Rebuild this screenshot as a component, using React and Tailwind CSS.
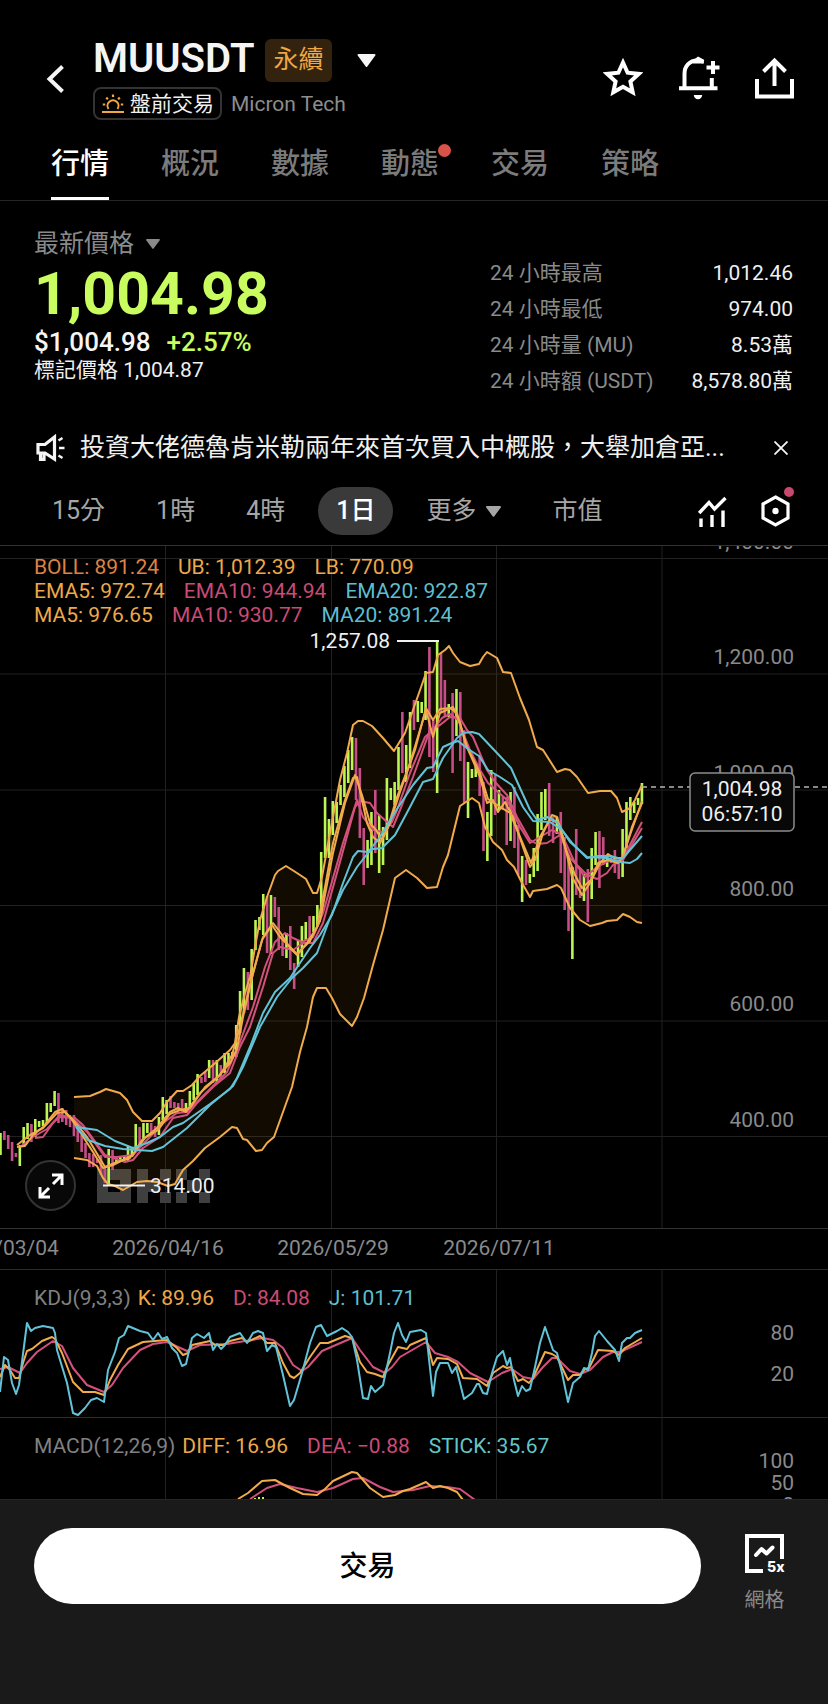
const UP = "#bdf553";
const DOWN = "#c74d88";
const ORANGE = "#f2ab4c";
const PINK = "#d4517d";
const BLUE = "#62c3d8";

const STEP = 3.864;

// [top, bottom, rising] per day
const candles = [
  [588, 610, 1], [586, 595, 0], [590, 604, 0], [597, 616, 0], [608, 612, 0], [600, 621, 1], [582, 602, 1], [578, 594, 1],
  [579, 597, 0], [574, 592, 1], [576, 582, 1], [575, 581, 1], [558, 578, 1], [558, 567, 1], [546, 561, 1], [548, 578, 0],
  [563, 577, 0], [565, 580, 0], [570, 582, 0], [570, 591, 0], [582, 597, 0], [590, 607, 0], [598, 613, 0], [608, 622, 0],
  [609, 622, 0], [614, 618, 0], [610, 630, 0], [622, 638, 0], [604, 639, 1], [605, 625, 0], [613, 618, 1], [612, 617, 1],
  [611, 617, 1], [601, 616, 1], [603, 612, 1], [579, 605, 1], [582, 603, 0], [578, 595, 1], [578, 588, 1], [578, 588, 0],
  [581, 592, 0], [572, 590, 1], [552, 575, 1], [555, 569, 1], [551, 563, 0], [557, 563, 0], [558, 565, 0], [554, 567, 0],
  [558, 568, 1], [546, 563, 1], [538, 555, 1], [529, 550, 1], [532, 538, 0], [527, 537, 0], [515, 533, 1], [515, 538, 0],
  [515, 538, 1], [520, 534, 0], [508, 528, 1], [508, 520, 1], [507, 514, 1], [480, 512, 1], [446, 488, 1], [423, 468, 1],
  [427, 465, 0], [404, 455, 1], [375, 405, 1], [372, 385, 1], [349, 390, 1], [351, 408, 0], [350, 409, 1], [352, 372, 0],
  [362, 405, 0], [392, 411, 0], [388, 413, 1], [381, 425, 0], [418, 444, 0], [395, 422, 1], [381, 412, 1], [377, 395, 1],
  [371, 398, 0], [371, 387, 1], [360, 382, 1], [307, 368, 1], [252, 313, 1], [274, 313, 1], [256, 290, 1], [257, 278, 1],
  [240, 260, 1], [221, 252, 1], [205, 238, 1], [192, 225, 1], [193, 255, 0], [223, 293, 0], [283, 340, 0], [295, 323, 1],
  [267, 320, 1], [245, 308, 0], [270, 328, 1], [282, 320, 1], [233, 295, 1], [243, 255, 1], [237, 260, 1], [202, 245, 1],
  [167, 228, 0], [200, 237, 1], [167, 223, 1], [155, 185, 0], [156, 177, 1], [157, 168, 1], [126, 175, 1], [102, 212, 0],
  [175, 227, 0], [96, 248, 1], [108, 168, 0], [135, 172, 0], [159, 172, 1], [148, 228, 0], [144, 191, 1], [147, 216, 0],
  [185, 258, 0], [217, 273, 1], [224, 233, 1], [218, 232, 1], [210, 251, 0], [237, 306, 0], [267, 316, 1], [225, 291, 1],
  [230, 270, 0], [245, 265, 1], [252, 265, 0], [252, 300, 0], [247, 296, 1], [242, 303, 0], [280, 330, 0], [311, 357, 1],
  [315, 340, 0], [329, 338, 1], [303, 332, 1], [269, 326, 1], [247, 285, 1], [244, 275, 1], [238, 291, 0], [272, 298, 0],
  [272, 289, 1], [267, 328, 0], [292, 365, 0], [315, 386, 0], [322, 414, 1], [284, 350, 0], [323, 353, 0], [329, 356, 1],
  [324, 377, 0], [303, 354, 1], [287, 320, 1], [286, 343, 0], [292, 320, 0], [310, 322, 1], [310, 318, 0], [305, 328, 0],
  [312, 334, 0], [284, 332, 1], [257, 303, 1], [252, 275, 1], [257, 268, 1], [253, 260, 1], [238, 259, 1],
];

const upper =
  "74,552 90,551 100,547 106,544 120,548 127,555 133,567 142,576 152,576 160,568 167,557 177,546 183,546 192,540 200,531 213,520 230,505 235,498 239,472 245,448 250,432 255,402 260,375 267,352 275,330 278,326 286,321 297,328 306,334 313,348 317,348 322,332 330,288 340,235 347,208 353,180 358,176 363,176 372,181 383,193 394,206 405,188 413,165 426,128 433,127 438,110 445,105 449,101 453,108 460,117 470,121 479,119 483,112 487,107 497,113 503,127 511,128 520,153 529,175 537,202 543,205 557,227 565,224 570,225 577,232 588,248 600,246 611,246 617,253 622,267 630,263 635,255 642,240";
const lower =
  "74,613 87,615 97,621 103,633 108,639 115,641 123,645 137,637 147,636 157,637 168,641 175,639 183,625 193,616 205,603 220,592 232,582 237,583 243,594 247,595 256,606 262,605 267,598 274,592 283,567 292,542 300,507 307,482 313,452 317,443 326,443 332,453 340,469 352,481 357,472 364,453 373,420 383,385 395,333 406,325 417,333 427,343 437,342 443,322 448,310 460,261 466,257 472,253 479,258 485,282 493,297 502,305 507,315 514,322 522,338 530,352 533,346 547,344 557,340 561,343 570,363 580,375 590,381 602,378 607,376 617,375 623,369 630,372 637,377 642,378";
const ma5 =
  "17,602 25,601 33,590 43,582 55,567 62,564 70,572 80,587 93,607 103,623 113,620 133,610 142,595 157,583 170,567 178,563 186,567 200,548 217,533 230,518 237,504 243,472 253,428 263,392 273,378 280,387 290,403 297,410 307,398 317,382 325,342 333,298 345,255 353,233 357,232 362,255 367,278 373,292 380,298 388,282 397,252 410,218 426,165 433,192 440,168 453,162 460,178 467,202 480,232 487,258 493,255 498,267 505,257 513,272 523,302 530,322 535,315 543,288 552,270 557,272 563,292 572,332 582,350 590,338 598,318 608,315 618,318 623,312 632,282 642,258";
const ema5 =
  "17,600 30,590 43,583 57,568 65,567 75,577 87,592 105,622 117,617 130,613 145,593 158,585 170,569 180,565 190,563 205,542 220,530 232,510 240,482 250,440 262,395 272,380 280,392 290,402 297,409 310,396 320,376 333,308 345,258 355,230 362,250 370,278 376,285 382,295 390,278 400,247 415,205 426,163 433,175 440,164 450,163 457,168 466,200 480,228 488,254 500,262 510,268 520,292 531,318 540,292 550,274 558,278 566,305 575,330 582,343 592,334 600,318 608,309 614,313 622,313 630,290 642,256";
const ma10 =
  "35,593 43,592 53,578 59,572 75,573 83,580 105,610 125,617 133,615 143,603 160,592 173,573 187,570 197,558 213,542 230,528 240,502 250,482 263,442 273,408 280,402 293,405 303,398 313,398 323,378 337,328 355,262 360,256 370,258 377,268 387,277 393,282 400,265 413,232 430,185 440,180 450,172 460,173 467,185 473,192 487,225 495,237 507,250 517,272 530,295 537,299 547,298 560,290 570,313 587,330 597,334 607,328 613,320 623,315 642,283";
const ema10 =
  "20,602 33,592 47,584 60,570 72,573 87,587 105,612 117,612 133,610 147,595 163,578 177,568 187,567 207,547 227,527 240,497 253,462 265,422 275,397 285,388 293,393 302,397 313,392 323,368 343,298 357,255 363,272 373,285 383,287 392,277 397,265 410,228 425,192 433,185 442,173 450,169 458,175 470,205 480,225 488,238 507,255 520,282 530,298 540,292 552,285 562,290 575,318 585,332 597,322 610,315 622,315 642,277";
const ma20 =
  "76,582 88,595 105,601 123,604 152,606 163,602 187,583 210,560 233,541 243,522 260,482 277,452 292,433 303,423 317,408 330,373 343,345 357,322 368,308 373,304 382,303 395,290 410,262 423,237 433,234 443,213 457,193 463,188 472,187 479,189 497,208 511,223 520,243 530,265 537,275 547,272 557,277 570,297 587,312 607,313 620,317 630,318 637,314 642,308";
const ema20 =
  "76,582 97,585 115,596 133,603 147,598 160,592 173,582 183,578 210,559 230,544 237,533 250,502 263,468 275,447 290,433 310,403 320,390 332,370 343,338 353,312 358,306 368,307 380,292 397,264 413,240 427,223 433,222 443,202 452,198 458,196 468,204 479,211 488,225 500,232 512,240 523,262 533,276 550,277 562,285 573,299 587,313 598,311 610,311 622,314 630,305 642,291";

const kdjJ =
  "0,123 4,88 8,91 12,114 16,125 19,116 27,54 31,62 35,59 43,57 53,59 55,64 57,81 67,114 73,144 78,146 85,139 91,131 97,129 104,133 108,101 115,83 119,69 124,66 128,57 140,62 148,64 153,71 158,64 162,70 167,68 172,79 177,84 182,97 186,95 192,69 197,65 204,69 209,64 213,81 217,75 221,80 225,76 230,68 235,66 240,64 247,74 253,64 258,62 263,64 267,82 272,76 276,78 283,106 290,137 294,131 302,104 310,74 316,58 321,56 327,67 337,62 342,59 348,63 352,68 357,91 363,129 368,130 371,117 375,123 383,116 390,84 394,64 398,54 402,66 406,73 410,63 421,61 426,64 428,81 433,127 436,103 440,94 448,94 452,104 456,98 464,130 472,124 477,115 479,115 483,124 487,125 492,104 497,88 503,82 507,96 510,89 514,111 518,127 522,117 526,122 530,120 535,98 540,74 545,58 553,81 557,84 562,104 568,133 573,114 580,108 584,99 588,101 592,84 595,67 599,62 607,72 615,81 619,92 622,74 627,69 630,69 635,64 642,61";
const kdjK =
  "0,108 5,96 10,101 15,109 19,109 23,94 27,82 32,80 42,72 52,68 55,70 62,84 73,113 83,123 95,123 104,126 110,111 118,96 128,80 143,73 167,71 177,79 183,86 188,84 192,76 210,72 215,76 223,76 230,72 242,69 247,73 260,67 267,74 275,74 283,94 290,107 294,109 300,104 310,88 320,74 328,74 345,67 352,69 360,93 367,103 375,105 383,108 388,96 398,78 407,80 410,76 426,69 433,96 437,89 448,90 457,95 463,109 477,110 487,117 493,104 503,97 507,99 511,98 518,112 523,110 529,114 533,109 545,83 552,85 557,88 568,111 573,106 580,106 585,100 589,99 598,81 613,82 619,86 625,79 642,69";
const kdjD =
  "0,100 8,98 20,104 27,94 37,83 53,72 62,77 73,99 87,116 104,123 112,116 123,99 140,81 153,75 167,73 187,82 200,76 227,75 263,69 273,71 283,79 293,96 302,102 308,98 322,82 352,69 360,81 373,98 385,104 392,98 400,88 426,73 435,84 448,88 458,93 470,104 488,113 502,104 512,100 523,108 533,110 543,98 552,89 557,89 570,102 580,105 590,101 603,88 613,83 620,83 642,73";
const diff =
  "238,82 248,76 262,64 275,63 290,71 303,77 317,78 325,72 333,64 352,55 357,56 370,71 383,80 395,78 403,74 410,72 426,65 433,71 440,69 448,71 457,75 463,83";
const dea =
  "250,82 267,71 280,67 297,71 317,75 333,71 353,62 363,61 380,70 393,75 413,73 430,69 447,70 460,72 475,83";

const tabs = ["行情", "概況", "數據", "動態", "交易", "策略"];
const stats = [
  ["24 小時最高", "1,012.46"],
  ["24 小時最低", "974.00"],
  ["24 小時量 (MU)", "8.53萬"],
  ["24 小時額 (USDT)", "8,578.80萬"],
];
const frames = ["15分", "1時", "4時", "1日", "更多", "市值"];
const gridX = [165.5, 331.5, 496.5, 662];

function Caret({ className }) {
  return (
    <svg viewBox="0 0 18 13" className={className} fill="currentColor" aria-hidden="true">
      <path d="M1 0h16a1 1 0 0 1 .8 1.6l-8 10.8a1 1 0 0 1-1.6 0L.2 1.6A1 1 0 0 1 1 0z" />
    </svg>
  );
}

function Line({ points, color }) {
  return <polyline points={points} fill="none" stroke={color} strokeWidth="2" strokeLinejoin="round" />;
}

function Grid({ height }) {
  return (
    <g stroke="#212121">
      {gridX.map((x) => (
        <line key={x} x1={x} x2={x} y1="0" y2={height} />
      ))}
    </g>
  );
}

function Header() {
  return (
    <header className="flex items-center pt-[39px] pl-[46px] pr-[34px]">
      <button aria-label="返回" className="mr-[29px] pb-[2px]">
        <svg viewBox="0 0 18 28" className="w-[18px] h-[28px]" fill="none" stroke="#f5f5f5" strokeWidth="4">
          <path d="M16.5 1.5 3.5 14l13 12.5" />
        </svg>
      </button>
      <div>
        <div className="flex items-center h-[43px]">
          <h1 className="text-[40px] leading-[40px] pb-[3px] font-semibold text-[#f5f5f5]">MUUSDT</h1>
          <span className="ml-[11px] px-[8px] h-[43px] leading-[42px] rounded-md bg-[#33220d] text-[#efa644] text-[25px]">永續</span>
          <button aria-label="切換合約" className="ml-[25px] text-[#f5f5f5]">
            <Caret className="w-[19px] h-[13px]" />
          </button>
        </div>
        <div className="flex items-center mt-[5px] gap-[9px]">
          <span className="flex items-center gap-[6px] h-[33px] pl-[7px] pr-[6px] rounded-lg border-2 border-[#333] text-[21px] leading-[28px] text-[#f0f0f0]">
            <svg viewBox="0 0 22 20" className="w-[22px] h-[20px]" fill="none" stroke="#efa644" strokeWidth="2">
              <path d="M0 18h22M6.5 15a5.5 5.5 0 1 1 9 0" />
              <path strokeWidth="2.2" d="M11 .5v2.4M4.2 3.6l1.7 1.7M17.8 3.6l-1.7 1.7M.8 10.5h2.4M18.8 10.5h2.4" />
            </svg>
            盤前交易
          </span>
          <span className="text-[21px] leading-[28px] text-[#8d8d8d]">Micron Tech</span>
        </div>
      </div>
      <div className="ml-auto flex items-center gap-[35px] pb-[3px]">
        <button aria-label="收藏">
          <svg viewBox="0 0 40 42" className="w-[40px] h-[42px]" fill="none" stroke="#fff" strokeWidth="4">
            <path d="M20 5.5 24.6 15.7 35.7 16.9 27.4 24.4 29.7 35.3 20 29.8 10.3 35.3 12.6 24.4 4.3 16.9 15.4 15.7z" />
          </svg>
        </button>
        <button aria-label="提醒">
          <svg viewBox="0 0 42 46" className="w-[42px] h-[46px]" fill="none" stroke="#fff" strokeWidth="4">
            <path d="M1 33.3h38.5M6.5 32V18.5C6.5 11 12 5.5 19 5.5c2.5 0 4.5.3 6.5 1.2M33.8 23v9M35 6v13M28.5 12.5h13" />
            <path d="M15 5.5 20 1.5l5.5 3 .5 4H15zM15.8 40h8.4a4.2 4.2 0 0 1-8.4 0z" fill="#fff" stroke="none" />
          </svg>
        </button>
        <button aria-label="分享">
          <svg viewBox="0 0 39 42" className="w-[39px] h-[42px]" fill="none" stroke="#fff" strokeWidth="4">
            <path d="M2 22v17.5h35V22M19.5 29V4M8.5 14.5l11-11 11 11" />
          </svg>
        </button>
      </div>
    </header>
  );
}

function Tabs() {
  return (
    <nav className="flex gap-[52px] pl-[51px] h-[81px] border-b border-[#262626]">
      {tabs.map((tab, i) => (
        <button
          key={tab}
          className={`relative h-[80px] pt-[13px] text-[29px] font-medium border-b-3 ${
            i === 0 ? "text-white border-white" : "text-[#7b7b7b] border-transparent"
          }`}
        >
          {tab}
          {tab === "動態" && <i className="absolute top-[24px] -right-[12px] w-[13px] h-[13px] rounded-full bg-[#d9534a]" />}
        </button>
      ))}
    </nav>
  );
}

function Quote() {
  return (
    <section className="flex justify-between pl-[34px] pr-[35px] h-[198px]">
      <div className="pt-[27px]">
        <button className="flex items-center gap-[12px] text-[25px] leading-[32px] text-[#8a8a8a]">
          最新價格
          <Caret className="w-[14px] h-[10px]" />
        </button>
        <div className="text-[59px] leading-[68px] font-bold text-[#c8fc5f]">1,004.98</div>
        <div className="flex gap-[16px] text-[26px] leading-[29px] font-medium">
          <span className="text-[#f5f5f5]">$1,004.98</span>
          <span className="text-[#c8fc5f]">+2.57%</span>
        </div>
        <div className="text-[21px] leading-[26px] text-[#f0f0f0]">標記價格 1,004.87</div>
      </div>
      <dl className="pt-[54px] w-[303px]">
        {stats.map(([label, value]) => (
          <div key={label} className="flex justify-between text-[21px] leading-[36px]">
            <dt className="text-[#8a8a8a]">{label}</dt>
            <dd className="text-[#f0f0f0]">{value}</dd>
          </div>
        ))}
      </dl>
    </section>
  );
}

function Notice() {
  return (
    <div className="flex items-center h-[48px] mt-[25px] pl-[36px] pr-[40px]">
      <svg viewBox="0 0 29 28" className="w-[29px] h-[28px] shrink-0" fill="none" stroke="#f5f5f5" strokeWidth="3.2">
        <path d="M2 10.5h7L18.5 3v22L9 19H2zM4.5 19v6.5H8V19" />
        <path strokeWidth="2.4" d="M22.5 6.5l4-2.5M23 14h5.5M22.5 21.5l4 2.5" />
      </svg>
      <p className="ml-[15px] flex-1 min-w-0 truncate text-[25px] leading-[36px] text-[#f0f0f0]">
        投資大佬德魯肯米勒兩年來首次買入中概股，大舉加倉亞...
      </p>
      <button aria-label="關閉">
        <svg viewBox="0 0 14 14" className="w-[14px] h-[14px]" stroke="#f5f5f5" strokeWidth="1.8">
          <path d="M.5.5l13 13M13.5.5l-13 13" />
        </svg>
      </button>
    </div>
  );
}

function Frames() {
  return (
    <div className="flex items-center gap-[15px] mt-[15px] pb-[10px] pl-[34px] pr-[38px]">
      {frames.map((frame) => (
        <button
          key={frame}
          className={`flex items-center gap-[10px] h-[48px] px-[18px] rounded-full text-[25px] whitespace-nowrap ${
            frame === "1日" ? "bg-[#3a3a3a] text-white font-medium" : "text-[#a6a6a6]"
          }`}
        >
          {frame}
          {frame === "更多" && <Caret className="w-[15px] h-[11px]" />}
        </button>
      ))}
      <div className="ml-auto flex items-center gap-[34px]">
        <button aria-label="指標">
          <svg viewBox="0 0 29 31" className="w-[29px] h-[31px]" fill="none" stroke="#fff" strokeWidth="3.4">
            <path d="M1.2 17 11 6.5l5.5 6.5L27.5 2M3 22.5V31M14 19v12M25 14.5V31" />
          </svg>
        </button>
        <button aria-label="設定" className="relative">
          <svg viewBox="0 0 29 32" className="w-[29px] h-[32px]" fill="none" stroke="#fff" strokeWidth="3.2">
            <path d="M14.5 2 27 9v14l-12.5 7L2 23V9z" />
            <circle cx="14.5" cy="16" r="3.2" fill="#fff" stroke="none" />
          </svg>
          <i className="absolute -top-[8px] -right-[4px] w-[10px] h-[10px] rounded-full bg-[#c8486e]" />
        </button>
      </div>
    </div>
  );
}

function Legend({ title, rows, className }) {
  return (
    <div className={`absolute left-[34px] flex gap-[7px] text-[21px] leading-6 whitespace-nowrap ${className}`}>
      {title && <h2 className="text-[#808080]">{title}</h2>}
      <div>
        {rows.map((row, i) => (
          <div key={i} className="flex gap-[19px]">
            {row.map(([text, color]) => (
              <span key={text} className={color}>{text}</span>
            ))}
          </div>
        ))}
      </div>
    </div>
  );
}

function PriceChart() {
  const gridY = [13.5, 129, 245, 360.5, 476, 591.5];
  const prices = ["1,400.00", "1,200.00", "1,000.00", "800.00", "600.00", "400.00"];
  const dates = [["2026/03/04", 3], ["2026/04/16", 168], ["2026/05/29", 333], ["2026/07/11", 499]];
  const band = `${upper} ${lower.split(" ").reverse().join(" ")}`;
  return (
    <section className="relative">
      <svg viewBox="0 0 828 724" className="block w-full h-auto" fontSize="21">
        <Grid height={683} />
        <g stroke="#212121">
          {gridY.map((y) => (
            <line key={y} x1="0" x2="828" y1={y} y2={y} />
          ))}
        </g>
        <g fill="#3f3f3f" fillRule="evenodd">
          <path d="M97 624h34v34H97zM108 635v12h12v-12z" />
          <path d="M137 624h11v34h-11zM148 635h12v12h-12zM160 624h11v11h-11zM160 647h11v11h-11z" />
          <path d="M176 624h11v11h-11zM199 624h11v11h-11zM187 635h12v12h-12zM176 647h11v11h-11zM199 647h11v11h-11z" />
        </g>
        <polygon points={band} fill="#f29a1f" fillOpacity="0.07" />
        {candles.map(([top, bottom, up], i) => (
          <line key={i} x1={0.5 + i * STEP} x2={0.5 + i * STEP} y1={top} y2={bottom} stroke={up ? UP : DOWN} strokeWidth="2.6" />
        ))}
        <Line points={upper} color={ORANGE} />
        <Line points={lower} color={ORANGE} />
        <Line points={ma10} color={PINK} />
        <Line points={ema10} color={PINK} />
        <Line points={ma5} color={ORANGE} />
        <Line points={ema5} color={ORANGE} />
        <Line points={ma20} color={BLUE} />
        <Line points={ema20} color={BLUE} />

        <g fill="#8a8a8a" textAnchor="end">
          {prices.map((price, i) => (
            <text key={price} x="794" y={gridY[i] - 10}>{price}</text>
          ))}
        </g>
        <line x1="642" x2="828" y1="242" y2="242" stroke="#b5b5b5" strokeWidth="1.5" strokeDasharray="5 4" />
        <rect x="690" y="228" width="104" height="58" rx="5" fill="#080808" stroke="#8c8c8c" strokeWidth="1.5" />
        <g fill="#f0f0f0" textAnchor="middle">
          <text x="742" y="251">1,004.98</text>
          <text x="742" y="276">06:57:10</text>
        </g>

        <g fill="#f0f0f0">
          <path d="M397 96h42M103 640.5h42" stroke="#f0f0f0" strokeWidth="2" />
          <text x="390" y="103" textAnchor="end">1,257.08</text>
          <text x="150" y="648">314.00</text>
        </g>

        <g fill="#8a8a8a" textAnchor="middle">
          {dates.map(([date, x]) => (
            <text key={date} x={x} y="710">{date}</text>
          ))}
        </g>
        <path d="M0 .5h828M0 683.5h828" stroke="#333" />
      </svg>
      <Legend
        className="top-[10px]"
        rows={[
          [["BOLL: 891.24", "text-[#dd8244]"], ["UB: 1,012.39", "text-[#eda84a]"], ["LB: 770.09", "text-[#eda84a]"]],
          [["EMA5: 972.74", "text-[#eda84a]"], ["EMA10: 944.94", "text-[#c94b76]"], ["EMA20: 922.87", "text-[#5fbdd0]"]],
          [["MA5: 976.65", "text-[#eda84a]"], ["MA10: 930.77", "text-[#c94b76]"], ["MA20: 891.24", "text-[#5fbdd0]"]],
        ]}
      />
      <button
        aria-label="全螢幕"
        className="absolute left-[25px] bottom-[58px] flex items-center justify-center w-[51px] h-[51px] rounded-full border-2 border-[#333] bg-[#080808]"
      >
        <svg viewBox="0 0 26 26" className="w-[26px] h-[26px]" fill="none" stroke="#fff" strokeWidth="3">
          <path d="M14 2h10v10M2 14v10h10M24 2l-9 9M2 24l9-9" />
        </svg>
      </button>
    </section>
  );
}

function KdjChart() {
  return (
    <section className="relative">
      <svg viewBox="0 0 828 148" className="block w-full h-auto" fontSize="21">
        <Grid height={148} />
        <path d="M0 .5h828" stroke="#2b2b2b" />
        <Line points={kdjD} color={PINK} />
        <Line points={kdjK} color={ORANGE} />
        <Line points={kdjJ} color={BLUE} />
        <g fill="#8a8a8a" textAnchor="end">
          <text x="794" y="71">80</text>
          <text x="794" y="112">20</text>
        </g>
      </svg>
      <Legend
        className="top-[17px]"
        title="KDJ(9,3,3)"
        rows={[[["K: 89.96", "text-[#eda84a]"], ["D: 84.08", "text-[#c94b76]"], ["J: 101.71", "text-[#5fbdd0]"]]]}
      />
    </section>
  );
}

function MacdChart() {
  return (
    <section className="relative">
      <svg viewBox="0 0 828 82" className="block w-full h-auto" fontSize="21">
        <Grid height={82} />
        <path d="M0 .5h828" stroke="#2b2b2b" />
        <path d="M255 81v1M259 80v2M263 80v2" stroke={UP} strokeWidth="2" />
        <Line points={dea} color={PINK} />
        <Line points={diff} color={ORANGE} />
        <g fill="#8a8a8a" textAnchor="end">
          <text x="794" y="51">100</text>
          <text x="794" y="73">50</text>
          <text x="794" y="95">0</text>
        </g>
      </svg>
      <Legend
        className="top-[17px]"
        title="MACD(12,26,9)"
        rows={[[["DIFF: 16.96", "text-[#eda84a]"], ["DEA: −0.88", "text-[#c94b76]"], ["STICK: 35.67", "text-[#62c6c8]"]]]}
      />
    </section>
  );
}

function Footer() {
  return (
    <footer className="flex items-start gap-[43px] pt-[28px] pb-[100px] pl-[34px] pr-[43px] bg-[#1a1a1a] border-t border-[#262626]">
      <button className="flex-1 h-[76px] pt-[2px] rounded-full bg-white text-black text-[28px] font-medium">交易</button>
      <button className="flex flex-col items-center pt-[5px] text-[#8a8a8a] text-[20px] leading-[28px]">
        <svg viewBox="0 0 41 41" className="w-[41px] h-[41px] mb-[12px]" fill="none" stroke="#fff" strokeWidth="4">
          <path d="M19 38H3V3h35v23" />
          <path strokeLinecap="round" strokeLinejoin="round" d="M12 22l5.5-6 5 4.5 6-6" />
          <text x="23" y="39" fontSize="14" fontWeight="800" fill="#fff" stroke="none" className="font-['Inter',sans-serif]">5x</text>
        </svg>
        網格
      </button>
    </footer>
  );
}

export default function App() {
  return (
    <div className="bg-white">
      <main className="w-full overflow-hidden rounded-b-xl bg-black font-['Roboto','Noto_Sans_CJK_TC',sans-serif]">
        <Header />
        <Tabs />
        <Quote />
        <Notice />
        <Frames />
        <PriceChart />
        <KdjChart />
        <MacdChart />
        <Footer />
      </main>
    </div>
  );
}
